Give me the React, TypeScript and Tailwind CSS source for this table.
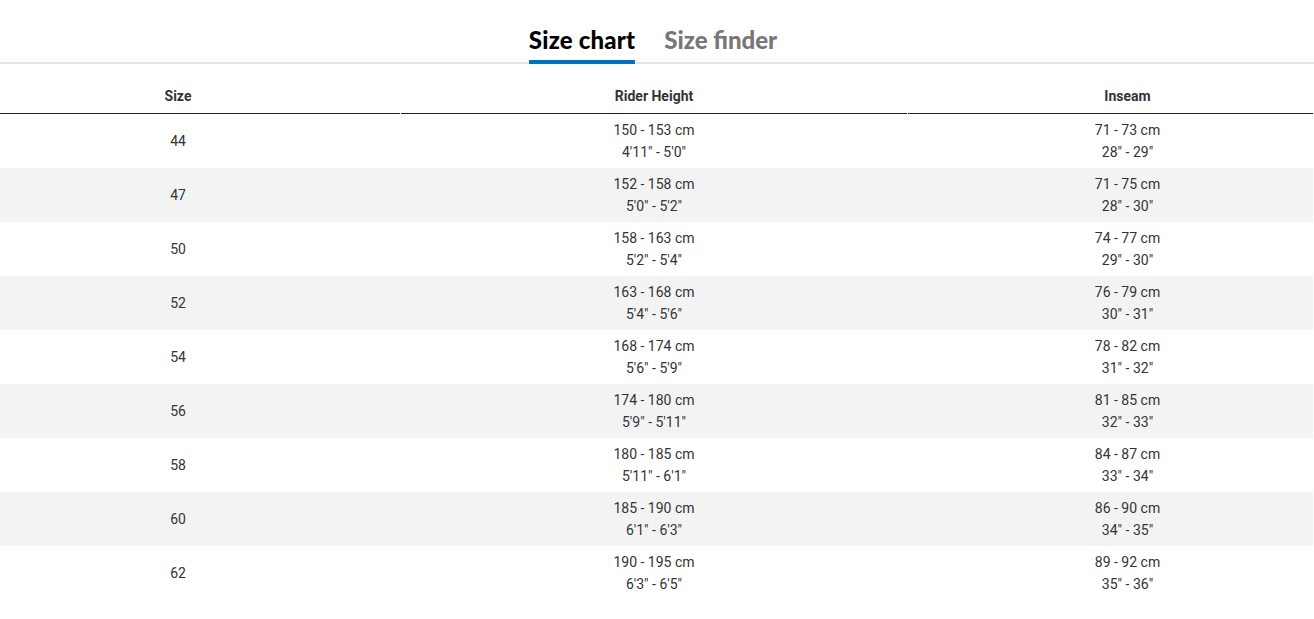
const rows = [
  ["44", "150 - 153 cm", "4'11\" - 5'0\"", "71 - 73 cm", "28\" - 29\""],
  ["47", "152 - 158 cm", "5'0\" - 5'2\"", "71 - 75 cm", "28\" - 30\""],
  ["50", "158 - 163 cm", "5'2\" - 5'4\"", "74 - 77 cm", "29\" - 30\""],
  ["52", "163 - 168 cm", "5'4\" - 5'6\"", "76 - 79 cm", "30\" - 31\""],
  ["54", "168 - 174 cm", "5'6\" - 5'9\"", "78 - 82 cm", "31\" - 32\""],
  ["56", "174 - 180 cm", "5'9\" - 5'11\"", "81 - 85 cm", "32\" - 33\""],
  ["58", "180 - 185 cm", "5'11\" - 6'1\"", "84 - 87 cm", "33\" - 34\""],
  ["60", "185 - 190 cm", "6'1\" - 6'3\"", "86 - 90 cm", "34\" - 35\""],
  ["62", "190 - 195 cm", "6'3\" - 6'5\"", "89 - 92 cm", "35\" - 36\""],
];

export default function App() {
  return (
    <div className="min-h-screen bg-white font-['Roboto',sans-serif] text-[14px] text-[#333]">
      {/* Tabs */}
      <div className="flex justify-center gap-[29px] border-b-2 border-[#e6e6e6] pt-[25px] pr-[8px]">
        <div className="-mb-[2px] border-b-4 border-[#0073bb] pb-[6px] font-['Lato',sans-serif] text-[24px] font-black leading-[29px] tracking-[0.2px] text-black">
          Size chart
        </div>
        <div className="-mb-[2px] border-b-4 border-transparent pb-[6px] font-['Lato',sans-serif] text-[24px] font-black leading-[29px] text-[#777]">
          Size finder
        </div>
      </div>

      {/* Table */}
      <div className="w-[1313px]">
        <div className="grid grid-cols-[400px_506px_1fr] gap-x-px font-bold">
          <div className="border-b border-[#222] pr-[44px] pt-[23px] pb-[8px] text-center leading-[18px]">Size</div>
          <div className="border-b border-[#222] pt-[23px] pb-[8px] text-center leading-[18px]">Rider Height</div>
          <div className="border-b border-[#222] pl-[34px] pt-[23px] pb-[8px] text-center leading-[18px]">Inseam</div>
        </div>
        {rows.map((r, i) => (
          <div
            key={r[0]}
            className={`grid grid-cols-[400px_506px_1fr] gap-x-px py-[5px] leading-[22px] ${i % 2 === 1 ? "bg-[#f3f3f3]" : "bg-white"}`}
          >
            <div className="flex items-center justify-center pr-[44px]">{r[0]}</div>
            <div className="flex flex-col items-center">
              <span>{r[1]}</span>
              <span>{r[2]}</span>
            </div>
            <div className="flex flex-col items-center pl-[34px]">
              <span>{r[3]}</span>
              <span>{r[4]}</span>
            </div>
          </div>
        ))}
      </div>
    </div>
  );
}
